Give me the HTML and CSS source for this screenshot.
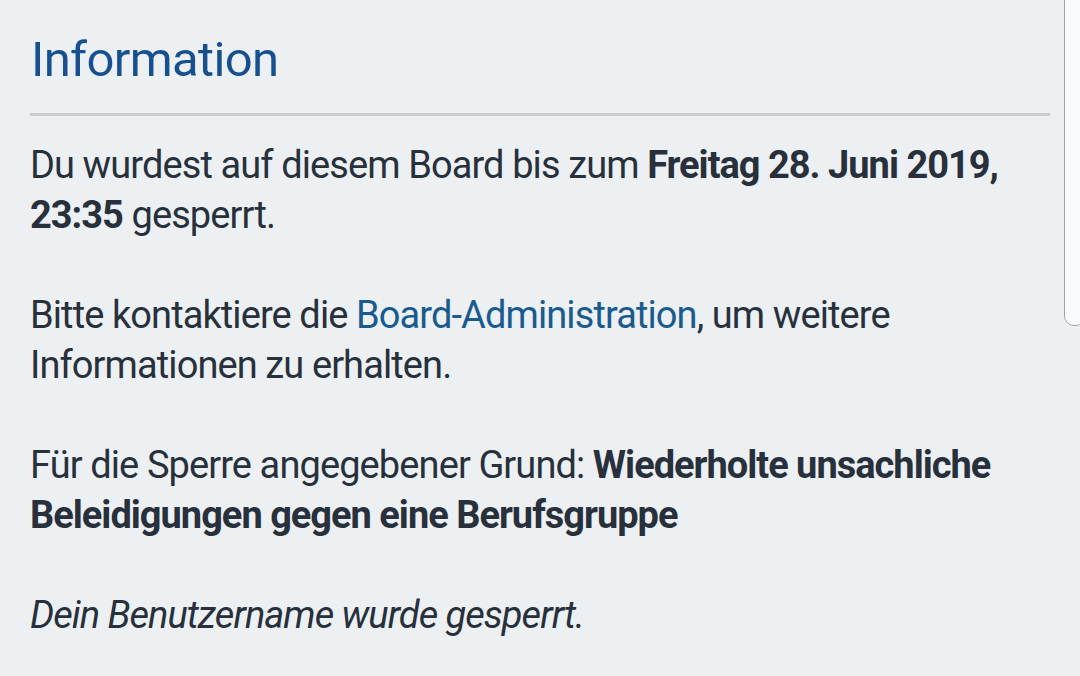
FILE: index.html
```html
<!DOCTYPE html>
<html lang="de">
<head>
<meta charset="utf-8">
<title>Information</title>
<link rel="stylesheet" href="styles.css">
</head>
<body>
<div class="panel">
  <h2 class="title">Information</h2>
  <div class="content">
    <p>Du wurdest auf diesem Board bis zum <strong>Freitag 28. Juni 2019, 23:35</strong> gesperrt.</p>
    <p>Bitte kontaktiere die <a href="#">Board-Administration</a>, um weitere Informationen zu erhalten.</p>
    <p>Für die Sperre angegebener Grund: <strong>Wiederholte unsachliche Beleidigungen gegen eine Berufsgruppe</strong></p>
    <p><em>Dein Benutzername wurde gesperrt.</em></p>
  </div>
</div>
<div class="handle"></div>
</body>
</html>
```

FILE: styles.css
```css
html, body {
  margin: 0;
  padding: 0;
  background: #ECF0F3;
  height: 100%;
  overflow: hidden;
}
body {
  font-family: Roboto, "Noto Sans", sans-serif;
  color: #28303B;
}
.panel {
  padding: 31px 30px 0 30px;
}
.title {
  margin: 0;
  font-size: 49px;
  font-weight: 400;
  line-height: 58px;
  letter-spacing: -0.65px;
  color: #165090;
  padding-left: 1px;
  padding-bottom: 24px;
  border-bottom: 3px solid #CACCCE;
}
.content {
  padding-top: 24px;
  font-size: 38px;
  line-height: 50px;
  letter-spacing: -0.9px;
}
.content p {
  margin: 0 0 50px 0;
}
.content strong {
  font-weight: 700;
  letter-spacing: -1px;
}
.content em {
  letter-spacing: -0.98px;
}
.content a {
  color: #1A5B8E;
  text-decoration: none;
}
.handle {
  position: absolute;
  top: -10px;
  right: -6px;
  width: 20px;
  height: 334px;
  background: #F9FAFB;
  border: 1.5px solid #A5A5A5;
  border-radius: 10px;
}
```
